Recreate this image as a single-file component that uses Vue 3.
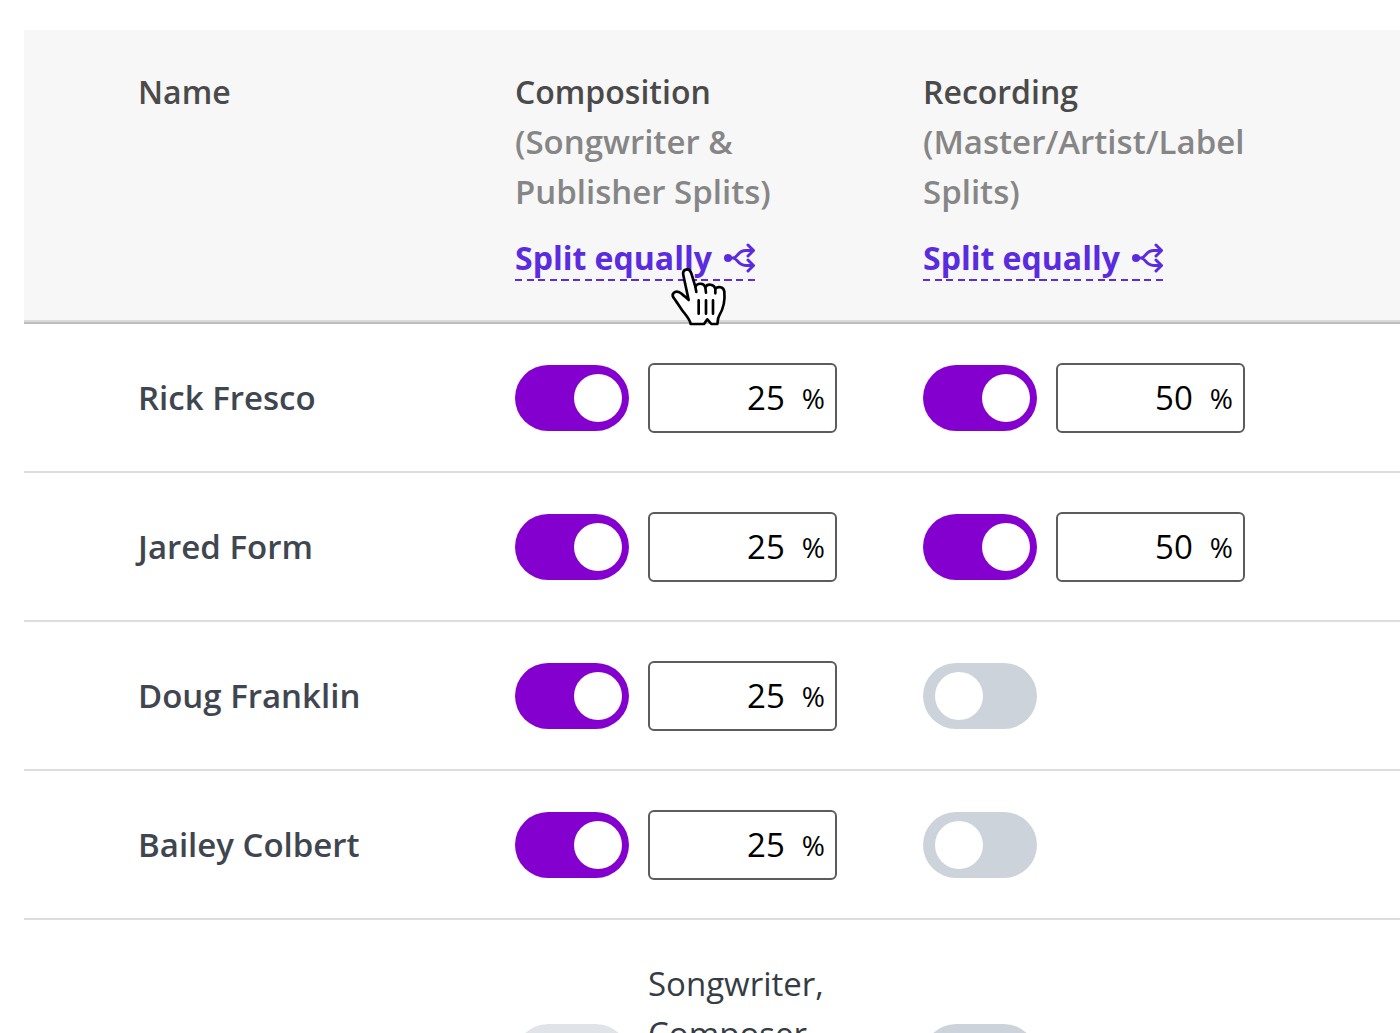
<script setup>
import { reactive } from 'vue'

const columns = [
  { key: 'composition', title: 'Composition', note: '(Songwriter & Publisher Splits)', hovered: true },
  { key: 'recording', title: 'Recording', note: '(Master/Artist/Label Splits)', hovered: false },
]

const people = reactive([
  { name: 'Rick Fresco', composition: { on: true, share: 25 }, recording: { on: true, share: 50 } },
  { name: 'Jared Form', composition: { on: true, share: 25 }, recording: { on: true, share: 50 } },
  { name: 'Doug Franklin', composition: { on: true, share: 25 }, recording: { on: false, share: 0 } },
  { name: 'Bailey Colbert', composition: { on: true, share: 25 }, recording: { on: false, share: 0 } },
])

function splitEqually(key) {
  const active = people.filter((p) => p[key].on)
  active.forEach((p) => (p[key].share = Math.round(100 / active.length)))
}
</script>

<template>
  <main class="page">
    <table class="splits">
      <colgroup>
        <col class="col-name" />
        <col class="col-composition" />
        <col />
      </colgroup>
      <thead>
        <tr>
          <th scope="col" class="name">Name</th>
          <th v-for="col in columns" :key="col.key" scope="col">
            <div>{{ col.title }}</div>
            <div class="note">{{ col.note }}</div>
            <a href="#" class="split-link" @click.prevent="splitEqually(col.key)">
              <span>Split equally</span>
              <svg class="branch" viewBox="0 0 32 30" aria-hidden="true">
                <circle cx="5" cy="15" r="4" fill="currentColor" />
                <path d="M5 15H10C15 15 14 7.500 23 7.500H30M10 15C15 15 14 22.500 23 22.500H30M25 2L30.500 7.500L25 13M25 17L30.500 22.500L25 28" />
              </svg>
              <svg v-if="col.hovered" class="pointer" viewBox="0 0 174 186" aria-hidden="true">
                <path d="M62 174C60 160 48 148 36 132C26 118 18 104 10 94C4 84 14 74 26 78C36 82 44 92 56 102L40 28C36 8 58 4 64 22L76 62C82 50 102 50 106 64C112 52 132 54 136 68C144 60 162 62 163 78C166 108 160 128 148 148C142 158 144 166 142 174H124L112 160L102 174Z" />
                <path d="M76 62L79 78M106 64L108 80M136 68V82M86 103V143M108 103V143M129 103V143" />
              </svg>
            </a>
          </th>
        </tr>
      </thead>
      <tbody>
        <tr v-for="person in people" :key="person.name">
          <th scope="row" class="name">{{ person.name }}</th>
          <td v-for="col in columns" :key="col.key">
            <div class="controls">
              <input
                v-model="person[col.key].on"
                class="toggle"
                type="checkbox"
                role="switch"
                :aria-label="`${person.name}: ${col.title}`"
              />
              <label v-if="person[col.key].on" class="share">
                <input
                  v-model="person[col.key].share"
                  type="text"
                  inputmode="numeric"
                  :aria-label="`${person.name}: ${col.title} share`"
                />
                <span>%</span>
              </label>
            </div>
          </td>
        </tr>
        <tr class="roles">
          <td></td>
          <td>
            <div class="controls">
              <input id="roles-composition" class="toggle faded" type="checkbox" role="switch" />
              <label for="roles-composition">Songwriter,<br />Composer,</label>
            </div>
          </td>
          <td>
            <div class="controls">
              <input class="toggle" type="checkbox" role="switch" aria-label="Recording" />
            </div>
          </td>
        </tr>
      </tbody>
    </table>
  </main>
</template>

<style>
body {
  margin: 0;
  background: #fff;
}
</style>

<style scoped>
.page {
  box-sizing: border-box;
  height: 100vh;
  padding: 30px 0 0 24px;
  overflow: hidden;
  font-family: "Open Sans", sans-serif;
  font-size: 33px;
  line-height: 50px;
  color: #353c44;
}

.splits {
  width: 100%;
  table-layout: fixed;
  border-collapse: separate;
  border-spacing: 0;
}

.col-name {
  width: 491px;
}

.col-composition {
  width: 408px;
}

th,
td {
  padding: 0;
  text-align: left;
}

th {
  font-weight: 600;
}

.name {
  padding-left: 114px;
}

thead th {
  box-sizing: border-box;
  height: 294px;
  padding-top: 37px;
  vertical-align: top;
  background: #f7f7f7;
  border-bottom: 2px solid #bdbdbd;
  box-shadow: inset 0 -2px #dadada;
  color: #4a4a4a;
  font-size: 32px;
}

.note {
  width: 330px;
  color: #868686;
  font-size: 33px;
}

.split-link {
  position: relative;
  display: inline-flex;
  align-items: center;
  gap: 11px;
  height: 46px;
  margin-top: 18px;
  color: #5b2be0;
  font-weight: 700;
  text-decoration: none;
  background: repeating-linear-gradient(90deg, #5b2be0 0 3%, transparent 3% 4.85%) bottom / 100% 2px no-repeat;
}

.branch {
  width: 32px;
  height: 30px;
  fill: none;
  stroke: currentColor;
  stroke-width: 3;
  stroke-linecap: round;
  stroke-linejoin: round;
}

.branch circle {
  stroke: none;
}

.pointer {
  position: absolute;
  top: 31px;
  left: 155px;
  width: 58px;
  height: 62px;
  fill: #fff;
  stroke: #000;
  stroke-width: 8;
  stroke-linecap: round;
  stroke-linejoin: round;
}

tbody th,
tbody td {
  box-sizing: border-box;
  height: 149px;
  border-bottom: 2px solid #dcdde0;
}

tbody th {
  color: #3f4650;
}

.controls {
  display: flex;
  align-items: center;
  gap: 19px;
}

.toggle {
  flex: none;
  width: 114px;
  height: 66px;
  margin: 0;
  padding: 9px 12px;
  box-sizing: border-box;
  appearance: none;
  border-radius: 33px;
  background: #cdd3db;
}

.toggle::before {
  content: "";
  display: block;
  width: 48px;
  height: 48px;
  border-radius: 50%;
  background: #fff;
}

.toggle:checked {
  padding-left: 59px;
  padding-right: 7px;
  background: #8400cf;
}

.toggle.faded {
  background: #e0e4e9;
}

.share {
  display: flex;
  align-items: center;
  box-sizing: border-box;
  width: 189px;
  height: 70px;
  padding-right: 10px;
  border: 2px solid #5c5c5c;
  border-radius: 6px;
  color: #000;
}

.share input {
  flex: 1;
  min-width: 0;
  padding: 0 17px 0 0;
  border: 0;
  background: none;
  color: inherit;
  font: inherit;
  text-align: right;
}

.share span {
  font-size: 28px;
}

.roles td {
  height: 200px;
  padding-top: 39px;
  vertical-align: top;
  border: 0;
}

.roles .controls {
  align-items: flex-start;
}

.roles .toggle {
  margin-top: 65px;
}
</style>
